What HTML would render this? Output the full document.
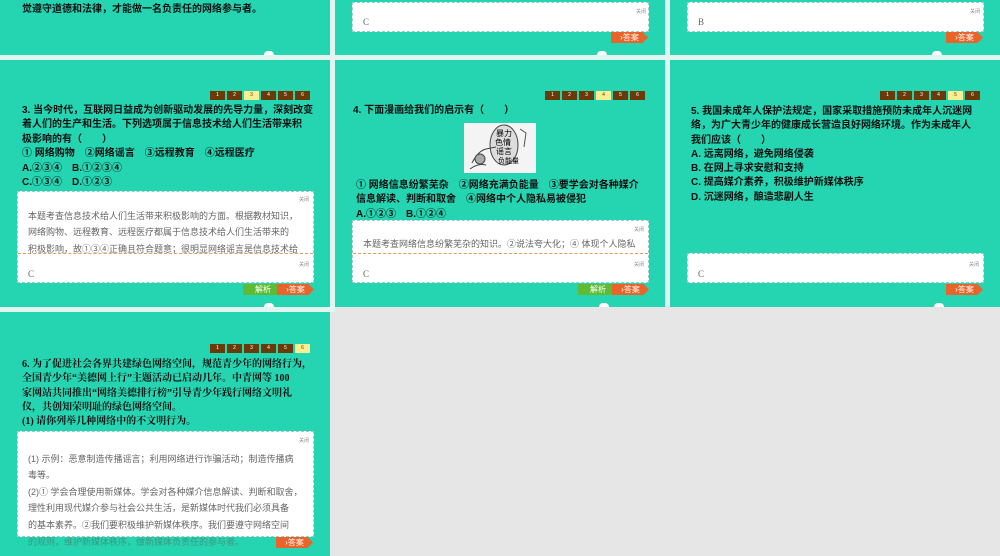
<!DOCTYPE html>
<html><head><meta charset="utf-8"><style>
*{margin:0;padding:0;box-sizing:border-box}
body{width:1000px;height:556px;background:#e6e6e6;position:relative;overflow:hidden;font-family:"Liberation Sans","Noto Sans CJK SC",sans-serif}
.s{position:absolute;background:#25d4b1}
.gap{position:absolute;background:#e2f5f0}
.t{position:absolute;font-size:10px;line-height:14.3px;color:#111;white-space:nowrap}
.serif{font-family:"Liberation Serif","Noto Serif CJK SC",serif}
.box{position:absolute;background:#fff;border:1px dashed #9cc}
.close{position:absolute;font-size:5px;color:#888}
.bt{position:absolute;font-size:9px;line-height:15px;color:#666;white-space:nowrap}
.nav{position:absolute;display:flex;gap:2px}
.nav span{width:15px;height:9px;background:#6a3a08;color:#fff;font-size:5px;line-height:9px;text-align:center}
.nav span.a{background:#f7ef92;color:#6a3a08}
.ans{position:absolute;height:11px;width:37px;background:#e8642a;color:#fff;font-size:8px;line-height:11px;text-align:center;clip-path:polygon(0 0,85% 0,100% 50%,85% 100%,0 100%)}
.jx{position:absolute;height:11px;width:40px;background:#5dbb34;color:#fff;font-size:8px;line-height:11px;text-align:center;clip-path:polygon(0 0,88% 0,100% 50%,88% 100%,0 100%)}
.dot{position:absolute;width:10px;height:4px;background:#fff;border-radius:5px 5px 0 0}
.dash{position:absolute;border-top:1px dashed #e89a60}
</style></head><body>
<!-- row1 -->
<div class="s" style="left:0;top:0;width:330px;height:55px"></div>
<div class="s" style="left:335px;top:0;width:330px;height:55px"></div>
<div class="s" style="left:670px;top:0;width:330px;height:55px"></div>
<div class="gap" style="left:0;top:55px;width:1000px;height:5px"></div>
<div class="t" style="left:22px;top:3px;font-weight:bold">觉遵守道德和法律，才能做一名负责任的网络参与者。</div>
<div class="dot" style="left:264px;top:51px"></div>
<div class="box" style="left:352px;top:2px;width:297px;height:30px"></div>
<div class="close" style="left:636px;top:8px">关闭</div>
<div class="bt serif" style="left:363px;top:15px">C</div>
<div class="ans" style="left:611px;top:32px">›答案</div>
<div class="dot" style="left:597px;top:51px"></div>
<div class="box" style="left:687px;top:2px;width:297px;height:30px"></div>
<div class="close" style="left:970px;top:8px">关闭</div>
<div class="bt serif" style="left:698px;top:15px">B</div>
<div class="ans" style="left:946px;top:32px">›答案</div>
<div class="dot" style="left:932px;top:51px"></div>

<!-- row2 slide3 -->
<div class="s" style="left:0;top:60px;width:330px;height:247px"></div>
<div class="nav" style="left:210px;top:91px"><span>1</span><span>2</span><span class="a">3</span><span>4</span><span>5</span><span>6</span></div>
<div class="t" style="left:22px;top:104px;font-weight:bold;line-height:14.4px">3. 当今时代，互联网日益成为创新驱动发展的先导力量，深刻改变<br>着人们的生产和生活。下列选项属于信息技术给人们生活带来积<br>极影响的有（　　）<br>① 网络购物　②网络谣言　③远程教育　④远程医疗<br>A.②③④　B.①②③④<br>C.①③④　D.①②③</div>
<div class="box" style="left:17px;top:191px;width:297px;height:92px"></div>
<div class="close" style="left:299px;top:196px">关闭</div>
<div class="bt" style="left:28px;top:208px;line-height:16.3px">本题考查信息技术给人们生活带来积极影响的方面。根据教材知识，<br>网络购物、远程教育、远程医疗都属于信息技术给人们生活带来的<br>积极影响，故①③④正确且符合题意；很明显网络谣言是信息技术给</div>
<div style="position:absolute;left:18px;top:253px;width:295px;height:29px;background:#fff"></div>
<div class="dash" style="left:18px;top:253px;width:295px"></div>
<div class="close" style="left:299px;top:261px">关闭</div>
<div class="bt serif" style="left:28px;top:267px">C</div>
<div class="jx" style="left:243px;top:284px">解析</div>
<div class="ans" style="left:277px;top:284px">›答案</div>
<div class="dot" style="left:264px;top:303px"></div>

<!-- slide4 -->
<div class="s" style="left:335px;top:60px;width:330px;height:247px"></div>
<div class="nav" style="left:545px;top:91px"><span>1</span><span>2</span><span>3</span><span class="a">4</span><span>5</span><span>6</span></div>
<div class="t" style="left:353px;top:104px;font-weight:bold">4. 下面漫画给我们的启示有（　　）</div>
<svg style="position:absolute;left:464px;top:123px" width="72" height="50" viewBox="0 0 72 50"><rect width="72" height="50" fill="#f4f4f4"/><ellipse cx="40" cy="22" rx="14" ry="20" fill="#ddd" stroke="#444" stroke-width="1"/><path d="M8 40 q6-12 14-14 l10-2 M6 46 q8-6 16-4" stroke="#444" fill="none"/><circle cx="16" cy="36" r="5" fill="#aaa" stroke="#444"/><path d="M56 6 l6 4 l-2 14" stroke="#555" fill="none"/><text x="32" y="13" font-size="8" font-family="Noto Sans CJK SC">暴力</text><text x="31" y="22" font-size="8" font-family="Noto Sans CJK SC">色情</text><text x="32" y="31" font-size="8" font-family="Noto Sans CJK SC">谣言</text><text x="34" y="40" font-size="7" font-family="Noto Sans CJK SC">负能量</text></svg>
<div class="t" style="left:356px;top:179px;font-weight:bold">① 网络信息纷繁芜杂　②网络充满负能量　③要学会对各种媒介<br>信息解读、判断和取舍　④网络中个人隐私易被侵犯<br>A.①②③　B.①②④</div>
<div class="box" style="left:352px;top:220px;width:297px;height:63px"></div>
<div class="close" style="left:634px;top:226px">关闭</div>
<div class="bt" style="left:363px;top:237px">本题考查网络信息纷繁芜杂的知识。②说法夸大化；④ 体现个人隐私</div>
<div style="position:absolute;left:353px;top:253px;width:295px;height:29px;background:#fff"></div>
<div class="dash" style="left:353px;top:253px;width:295px"></div>
<div class="close" style="left:634px;top:261px">关闭</div>
<div class="bt serif" style="left:363px;top:267px">C</div>
<div class="jx" style="left:578px;top:284px">解析</div>
<div class="ans" style="left:612px;top:284px">›答案</div>
<div class="dot" style="left:599px;top:303px"></div>

<!-- slide5 -->
<div class="s" style="left:670px;top:60px;width:330px;height:247px"></div>
<div class="nav" style="left:880px;top:91px"><span>1</span><span>2</span><span>3</span><span>4</span><span class="a">5</span><span>6</span></div>
<div class="t" style="left:691px;top:105px;font-weight:bold">5. 我国未成年人保护法规定，国家采取措施预防未成年人沉迷网<br>络，为广大青少年的健康成长营造良好网络环境。作为未成年人<br>我们应该（　　）<br>A. 远离网络，避免网络侵袭<br>B. 在网上寻求安慰和支持<br>C. 提高媒介素养，积极维护新媒体秩序<br>D. 沉迷网络，酿造悲剧人生</div>
<div class="box" style="left:687px;top:253px;width:297px;height:30px"></div>
<div class="close" style="left:969px;top:261px">关闭</div>
<div class="bt serif" style="left:698px;top:267px">C</div>
<div class="ans" style="left:946px;top:284px">›答案</div>
<div class="dot" style="left:934px;top:303px"></div>

<div class="gap" style="left:0;top:307px;width:335px;height:5px"></div>
<div class="gap" style="left:330px;top:0;width:5px;height:307px"></div>
<div class="gap" style="left:665px;top:0;width:5px;height:307px"></div>

<!-- slide6 -->
<div class="s" style="left:0;top:312px;width:330px;height:244px"></div>
<div class="nav" style="left:210px;top:344px"><span>1</span><span>2</span><span>3</span><span>4</span><span>5</span><span class="a">6</span></div>
<div class="t serif" style="left:22px;top:358px;font-weight:bold;line-height:14.3px">6. 为了促进社会各界共建绿色网络空间，规范青少年的网络行为，<br>全国青少年“美德网上行”主题活动已启动几年。中青网等 100<br>家网站共同推出“网络美德排行榜”引导青少年践行网络文明礼<br>仪，共创知荣明耻的绿色网络空间。<br>(1) 请你列举几种网络中的不文明行为。</div>
<div class="box" style="left:17px;top:431px;width:297px;height:106px"></div>
<div class="close" style="left:299px;top:437px">关闭</div>
<div class="bt" style="left:28px;top:451px;line-height:16.4px">(1) 示例：恶意制造传播谣言；利用网络进行诈骗活动；制造传播病<br>毒等。<br>(2)① 学会合理使用新媒体。学会对各种媒介信息解读、判断和取舍，<br>理性利用现代媒介参与社会公共生活，是新媒体时代我们必须具备<br>的基本素养。②我们要积极维护新媒体秩序。我们要遵守网络空间</div>
<div class="bt" style="left:28px;top:535px;color:#3a9a80;">的规则，维护新媒体秩序，做新媒体负责任的参与者。</div>
<div class="ans" style="left:276px;top:537px">›答案</div>
</body></html>
